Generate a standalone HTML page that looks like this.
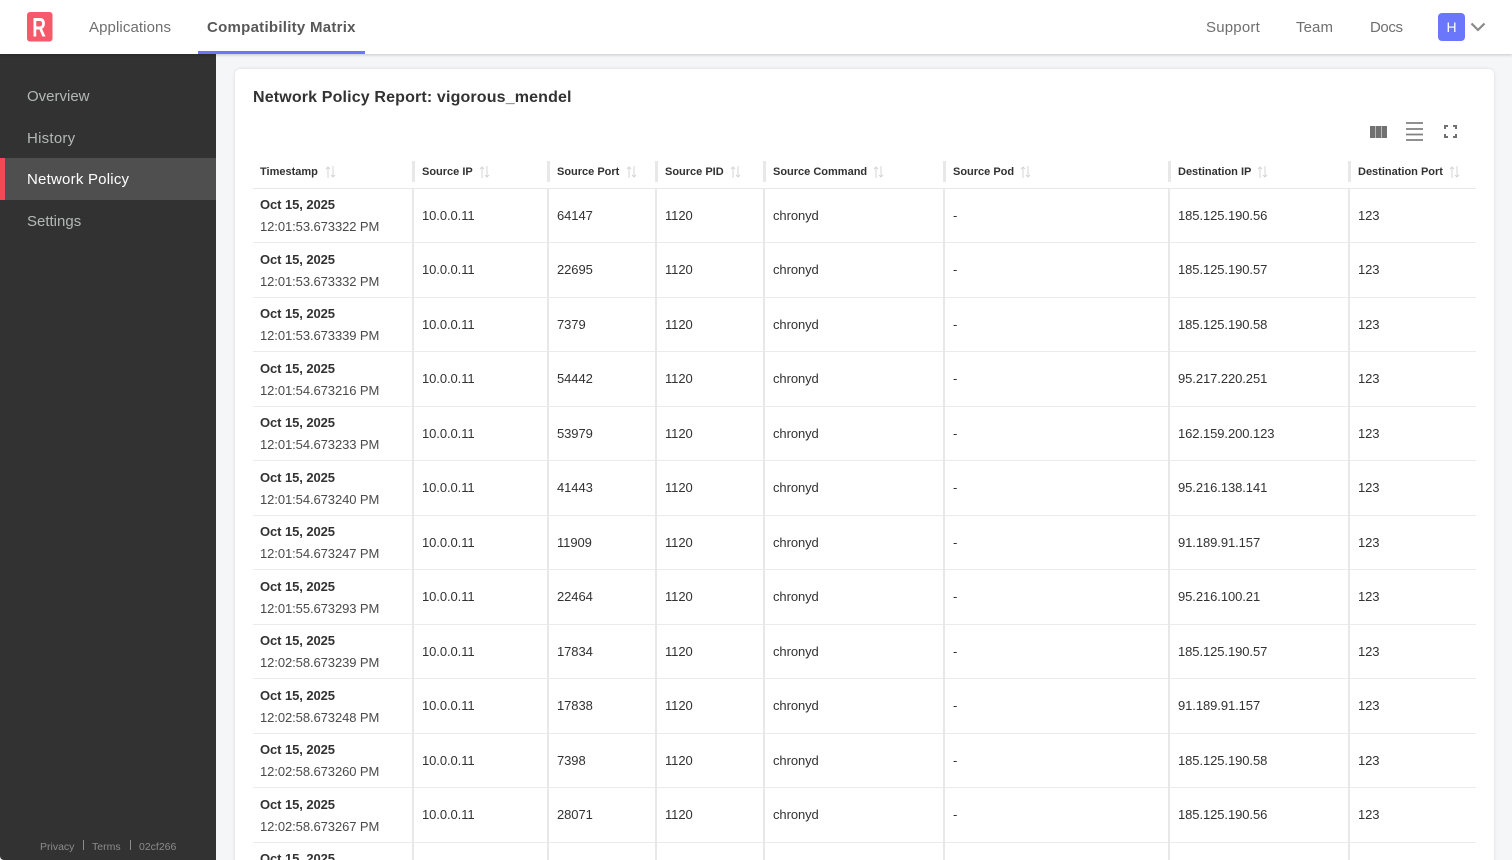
<!DOCTYPE html>
<html><head><meta charset="utf-8"><title>Network Policy Report</title>
<style>
*{box-sizing:border-box}
html,body{margin:0;padding:0;width:1512px;height:860px;overflow:hidden;background:#f5f6f8;font-family:"Liberation Sans",sans-serif}
#wrap{position:relative;width:1512px;height:860px;overflow:hidden;background:#f5f6f8}
.a{position:absolute;white-space:nowrap}
#top{position:absolute;left:0;top:0;width:1512px;height:54px;background:#fff;box-shadow:0 1px 3px rgba(0,0,0,.2);z-index:3}
.n{position:absolute;top:18px;font-size:15px;line-height:20px;color:#6f6f6f;white-space:nowrap}
#side{position:absolute;left:0;top:54px;width:216px;height:806px;background:#323232;border-bottom-left-radius:4px}
.s{position:absolute;left:27px;font-size:15px;line-height:20px;color:#b3b8b6}
#card{position:absolute;left:235px;top:69px;width:1259px;height:830px;background:#fff;border-radius:5px;box-shadow:0 0 3px rgba(0,0,0,.12)}
table{position:absolute;left:253px;top:154.5px;width:1223px;border-collapse:collapse;table-layout:fixed;font-size:13px;color:#323232}
th{height:33.5px;text-align:left;font-size:11px;font-weight:700;padding:2px 0 0 7px;color:#323232;border-bottom:1px solid #e8e8e8;position:relative;white-space:nowrap}
th+th{padding-left:9px}
th+th:before{content:"";position:absolute;left:-1px;top:6px;width:3px;height:21px;background:#e8e8e8}
th svg{margin-left:7px;vertical-align:-3px}
td{height:54.5px;padding:0 0 0 8px;border-bottom:1px solid #ebebeb;border-left:2px solid #e8e8e8;white-space:nowrap;letter-spacing:-.08px}
td:first-child{border-left:0;padding-left:7px;line-height:22px}
td b{font-size:13px;display:block;color:#323232;position:relative;top:1px}
td span{color:#4a4a4a;display:block;position:relative;top:1px}
</style></head><body><div id="wrap">
<div id="top">
<svg class="a" style="left:27px;top:12px" width="26" height="30" viewBox="0 0 26 30"><rect width="25.5" height="29.5" rx="3" fill="#f6596a"/><text transform="translate(5.2 24.700) scale(.7 1)" font-family="Liberation Sans" font-weight="700" font-size="27" fill="#fff">R</text></svg>
<div class="n" style="left:89px;letter-spacing:.1px">Applications</div>
<div class="n" style="left:207px;font-weight:700;color:#585858;letter-spacing:.27px">Compatibility Matrix</div>
<div class="a" style="left:198px;top:51px;width:167px;height:3px;background:#6a77fb"></div>
<div class="n" style="left:1206px;letter-spacing:.2px">Support</div>
<div class="n" style="left:1296px;letter-spacing:.1px">Team</div>
<div class="n" style="left:1370px;letter-spacing:-.4px">Docs</div>
<div class="a" style="left:1438px;top:13px;width:27px;height:28px;border-radius:4px;background:#6a77fb;color:#fff;font-size:14px;line-height:28px;text-align:center">H</div>
<svg class="a" style="left:1470px;top:22px" width="16" height="11" viewBox="0 0 16 11"><path d="M1.500 1.500 8 8l6.500-6.500" fill="none" stroke="#8a8a8a" stroke-width="2.200"/></svg>
</div>
<div id="side">
<div class="s" style="top:33px">Overview</div>
<div class="s" style="top:75px;letter-spacing:.25px">History</div>
<div class="a" style="left:0;top:104px;width:216px;height:42px;background:#4f4f4f;border-left:5px solid #f04a56"></div>
<div class="s" style="top:116px;color:#fff;letter-spacing:.22px">Network Policy</div>
<div class="s" style="top:158px">Settings</div>
<div class="a" style="left:40px;top:786px;font-size:10.5px;line-height:14px;color:#8c8c8c">Privacy</div>
<div class="a" style="left:83px;top:786px;width:1px;height:10px;background:#8c8c8c"></div>
<div class="a" style="left:92px;top:786px;font-size:10.5px;line-height:14px;color:#8c8c8c">Terms</div>
<div class="a" style="left:130px;top:786px;width:1px;height:10px;background:#8c8c8c"></div>
<div class="a" style="left:139px;top:786px;font-size:10.5px;line-height:14px;color:#8c8c8c">02cf266</div>
</div>
<div id="card"></div>
<div class="a" style="left:253px;top:87px;font-size:16px;line-height:21px;font-weight:700;color:#323232;letter-spacing:.15px">Network Policy Report: vigorous_mendel</div>
<svg class="a" style="left:1370px;top:126px" width="17" height="12"><path d="M0 0h5.300v12H0zM5.800 0h5.400v12H5.800zM11.700 0H17v12h-5.300z" fill="#717171"/></svg>
<svg class="a" style="left:1406px;top:122px" width="17" height="19"><path d="M0 1h17M0 7h17M0 12.500h17M0 18h17" stroke="#808080" stroke-width="1.800"/></svg>
<svg class="a" style="left:1444px;top:125px" width="13" height="13" fill="none" stroke="#717171" stroke-width="2"><path d="M1 4V1h3M9 1h3v3M12 9v3H9M4 12H1V9"/></svg>
<table>
<colgroup><col style="width:160px"><col style="width:135px"><col style="width:108px"><col style="width:108px"><col style="width:180px"><col style="width:225px"><col style="width:180px"><col style="width:127px"></colgroup>
<thead><tr>
<th>Timestamp<svg width="11" height="12" viewBox="0 0 11 12"><path d="M3 12V1M1 3l2-2 2 2M8 0v11M6 9l2 2 2-2" fill="none" stroke="#d5d5d5" stroke-width="1"/></svg></th>
<th>Source IP<svg style="margin-left:6px" width="11" height="12" viewBox="0 0 11 12"><path d="M3 12V1M1 3l2-2 2 2M8 0v11M6 9l2 2 2-2" fill="none" stroke="#d5d5d5" stroke-width="1"/></svg></th>
<th>Source Port<svg width="11" height="12" viewBox="0 0 11 12"><path d="M3 12V1M1 3l2-2 2 2M8 0v11M6 9l2 2 2-2" fill="none" stroke="#d5d5d5" stroke-width="1"/></svg></th>
<th>Source PID<svg style="margin-left:6px" width="11" height="12" viewBox="0 0 11 12"><path d="M3 12V1M1 3l2-2 2 2M8 0v11M6 9l2 2 2-2" fill="none" stroke="#d5d5d5" stroke-width="1"/></svg></th>
<th>Source Command<svg style="margin-left:6px" width="11" height="12" viewBox="0 0 11 12"><path d="M3 12V1M1 3l2-2 2 2M8 0v11M6 9l2 2 2-2" fill="none" stroke="#d5d5d5" stroke-width="1"/></svg></th>
<th>Source Pod<svg style="margin-left:6px" width="11" height="12" viewBox="0 0 11 12"><path d="M3 12V1M1 3l2-2 2 2M8 0v11M6 9l2 2 2-2" fill="none" stroke="#d5d5d5" stroke-width="1"/></svg></th>
<th>Destination IP<svg style="margin-left:6px" width="11" height="12" viewBox="0 0 11 12"><path d="M3 12V1M1 3l2-2 2 2M8 0v11M6 9l2 2 2-2" fill="none" stroke="#d5d5d5" stroke-width="1"/></svg></th>
<th>Destination Port<svg style="margin-left:6px" width="11" height="12" viewBox="0 0 11 12"><path d="M3 12V1M1 3l2-2 2 2M8 0v11M6 9l2 2 2-2" fill="none" stroke="#d5d5d5" stroke-width="1"/></svg></th>
</tr></thead>
<tbody>
<tr><td><b>Oct 15, 2025</b><span>12:01:53.673322 PM</span></td><td>10.0.0.11</td><td>64147</td><td>1120</td><td>chronyd</td><td>-</td><td>185.125.190.56</td><td>123</td></tr>
<tr><td><b>Oct 15, 2025</b><span>12:01:53.673332 PM</span></td><td>10.0.0.11</td><td>22695</td><td>1120</td><td>chronyd</td><td>-</td><td>185.125.190.57</td><td>123</td></tr>
<tr><td><b>Oct 15, 2025</b><span>12:01:53.673339 PM</span></td><td>10.0.0.11</td><td>7379</td><td>1120</td><td>chronyd</td><td>-</td><td>185.125.190.58</td><td>123</td></tr>
<tr><td><b>Oct 15, 2025</b><span>12:01:54.673216 PM</span></td><td>10.0.0.11</td><td>54442</td><td>1120</td><td>chronyd</td><td>-</td><td>95.217.220.251</td><td>123</td></tr>
<tr><td><b>Oct 15, 2025</b><span>12:01:54.673233 PM</span></td><td>10.0.0.11</td><td>53979</td><td>1120</td><td>chronyd</td><td>-</td><td>162.159.200.123</td><td>123</td></tr>
<tr><td><b>Oct 15, 2025</b><span>12:01:54.673240 PM</span></td><td>10.0.0.11</td><td>41443</td><td>1120</td><td>chronyd</td><td>-</td><td>95.216.138.141</td><td>123</td></tr>
<tr><td><b>Oct 15, 2025</b><span>12:01:54.673247 PM</span></td><td>10.0.0.11</td><td>11909</td><td>1120</td><td>chronyd</td><td>-</td><td>91.189.91.157</td><td>123</td></tr>
<tr><td><b>Oct 15, 2025</b><span>12:01:55.673293 PM</span></td><td>10.0.0.11</td><td>22464</td><td>1120</td><td>chronyd</td><td>-</td><td>95.216.100.21</td><td>123</td></tr>
<tr><td><b>Oct 15, 2025</b><span>12:02:58.673239 PM</span></td><td>10.0.0.11</td><td>17834</td><td>1120</td><td>chronyd</td><td>-</td><td>185.125.190.57</td><td>123</td></tr>
<tr><td><b>Oct 15, 2025</b><span>12:02:58.673248 PM</span></td><td>10.0.0.11</td><td>17838</td><td>1120</td><td>chronyd</td><td>-</td><td>91.189.91.157</td><td>123</td></tr>
<tr><td><b>Oct 15, 2025</b><span>12:02:58.673260 PM</span></td><td>10.0.0.11</td><td>7398</td><td>1120</td><td>chronyd</td><td>-</td><td>185.125.190.58</td><td>123</td></tr>
<tr><td><b>Oct 15, 2025</b><span>12:02:58.673267 PM</span></td><td>10.0.0.11</td><td>28071</td><td>1120</td><td>chronyd</td><td>-</td><td>185.125.190.56</td><td>123</td></tr>
<tr><td><b>Oct 15, 2025</b><span>&nbsp;</span></td><td></td><td></td><td></td><td></td><td></td><td></td><td></td></tr>
</tbody></table>
</div></body></html>
